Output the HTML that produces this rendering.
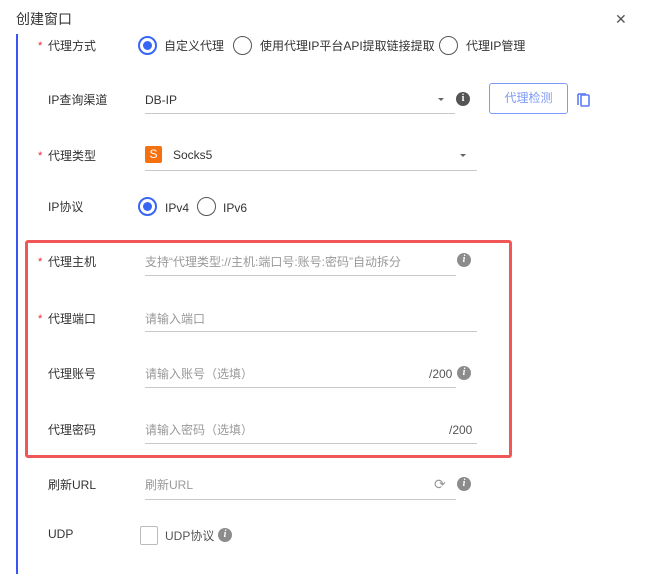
<!DOCTYPE html>
<html><head><meta charset="utf-8"><style>
*{margin:0;padding:0;box-sizing:border-box}
body{width:652px;height:571px;background:#fff;font-family:"Liberation Sans","Noto Sans CJK SC",sans-serif;font-size:12px;color:#333;position:relative;overflow:hidden}
.a{position:absolute;white-space:nowrap;line-height:16px}
.ph{color:#999}
.star{color:#f5222d;font-size:11px}
.ul{position:absolute;height:1px;background:#c8c8c8}
.radio{position:absolute;width:19px;height:19px;border:1.5px solid #555;border-radius:50%}
.radio.on{border:2px solid #3766f4}
.radio.on::after{content:"";position:absolute;left:3px;top:3px;width:9px;height:9px;border-radius:50%;background:#3766f4}
.info{position:absolute;width:14px;height:14px;border-radius:50%;background:#8c8c8c;color:#fff;font:bold italic 10px/14px "Liberation Serif",serif;text-align:center}
.info.dk{background:#555;font-style:normal}
.arrow{position:absolute;width:0;height:0;border-left:3px solid transparent;border-right:3px solid transparent;border-top:3px solid #666}
</style></head><body>
<div class="a" style="left:16px;top:11px;font-size:14px;color:#333">创建窗口</div>
<div class="a" style="left:615px;top:11px;font-size:14px;color:#555">✕</div>
<div style="position:absolute;left:16px;top:34px;width:2px;height:540px;background:#3b55f0"></div>

<div class="a star" style="left:38px;top:38px">*</div>
<div class="a" style="left:48px;top:38px">代理方式</div>
<div class="radio on" style="left:138px;top:36px"></div>
<div class="a" style="left:164px;top:38px">自定义代理</div>
<div class="radio" style="left:233px;top:36px"></div>
<div class="a" style="left:260px;top:38px">使用代理IP平台API提取链接提取</div>
<div class="radio" style="left:439px;top:36px"></div>
<div class="a" style="left:466px;top:38px">代理IP管理</div>

<div class="a" style="left:48px;top:92px">IP查询渠道</div>
<div class="a" style="left:145px;top:92px">DB-IP</div>
<div class="arrow" style="left:438px;top:98px"></div>
<div class="ul" style="left:145px;top:113px;width:310px"></div>
<div class="info dk" style="left:456px;top:92px">i</div>
<div style="position:absolute;left:489px;top:83px;width:79px;height:31px;border:1px solid #7d9af7;border-radius:3px;color:#7d9af7;text-align:center;line-height:29px">代理检测</div>
<svg style="position:absolute;left:576px;top:91px" width="16" height="17" viewBox="0 0 16 17"><path d="M2 3v11" stroke="#5b7cf7" stroke-width="1.6" fill="none"/><rect x="5" y="4" width="8" height="11" rx="1" stroke="#5b7cf7" stroke-width="1.6" fill="none"/><path d="M2 3h8" stroke="#5b7cf7" stroke-width="1.6"/></svg>

<div class="a star" style="left:38px;top:148px">*</div>
<div class="a" style="left:48px;top:148px">代理类型</div>
<div style="position:absolute;left:145px;top:146px;width:17px;height:17px;background:#f5710f;border-radius:2px;color:#fff;font-size:12px;text-align:center;line-height:17px">S</div>
<div class="a" style="left:173px;top:147px">Socks5</div>
<div class="arrow" style="left:460px;top:154px"></div>
<div class="ul" style="left:145px;top:170px;width:332px"></div>

<div class="a" style="left:48px;top:199px">IP协议</div>
<div class="radio on" style="left:138px;top:197px"></div>
<div class="a" style="left:165px;top:200px">IPv4</div>
<div class="radio" style="left:197px;top:197px"></div>
<div class="a" style="left:223px;top:200px">IPv6</div>

<div style="position:absolute;left:25px;top:240px;width:487px;height:218px;border:3px solid #f25757;border-radius:3px"></div>

<div class="a star" style="left:38px;top:254px">*</div>
<div class="a" style="left:48px;top:254px">代理主机</div>
<div class="a ph" style="left:145px;top:254px">支持“代理类型://主机:端口号:账号:密码”自动拆分</div>
<div class="ul" style="left:145px;top:275px;width:311px"></div>
<div class="info" style="left:457px;top:253px">i</div>

<div class="a star" style="left:38px;top:311px">*</div>
<div class="a" style="left:48px;top:311px">代理端口</div>
<div class="a ph" style="left:145px;top:311px">请输入端口</div>
<div class="ul" style="left:145px;top:331px;width:332px"></div>

<div class="a" style="left:48px;top:366px">代理账号</div>
<div class="a ph" style="left:145px;top:366px">请输入账号（选填）</div>
<div class="a" style="left:429px;top:366px;color:#555">/200</div>
<div class="ul" style="left:145px;top:387px;width:311px"></div>
<div class="info" style="left:457px;top:366px">i</div>

<div class="a" style="left:48px;top:422px">代理密码</div>
<div class="a ph" style="left:145px;top:422px">请输入密码（选填）</div>
<div class="a" style="left:449px;top:422px;color:#555">/200</div>
<div class="ul" style="left:145px;top:443px;width:332px"></div>

<div class="a" style="left:48px;top:477px">刷新URL</div>
<div class="a ph" style="left:145px;top:477px">刷新URL</div>
<div class="a" style="left:434px;top:476px;color:#999;font-size:14px">⟳</div>
<div class="ul" style="left:145px;top:499px;width:311px"></div>
<div class="info" style="left:457px;top:477px">i</div>

<div class="a" style="left:48px;top:526px">UDP</div>
<div style="position:absolute;left:140px;top:526px;width:18px;height:19px;border:1px solid #bbb;border-radius:2px"></div>
<div class="a" style="left:165px;top:528px;color:#555">UDP协议</div>
<div class="info" style="left:218px;top:528px">i</div>
</body></html>
